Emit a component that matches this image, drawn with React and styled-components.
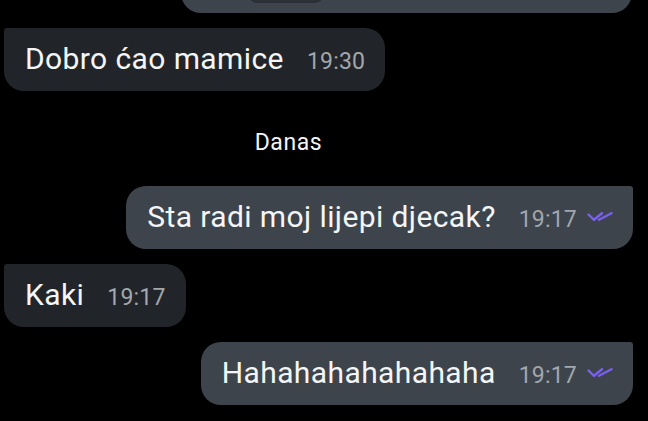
import React from 'react';
import styled, { createGlobalStyle } from 'styled-components';

const GlobalStyle = createGlobalStyle`
  html, body {
    margin: 0;
    padding: 0;
    background: #000;
    overflow: hidden;
  }
  body {
    font-family: Roboto, "Liberation Sans", sans-serif;
    -webkit-font-smoothing: antialiased;
  }
`;

const Chat = styled.div`
  display: flex;
  flex-direction: column;
  align-items: flex-start;
  gap: 15px;
  padding: 0 15px 0 4px;
  height: 421px;
  box-sizing: border-box;
`;

const Bubble = styled.div`
  align-self: ${p => (p.$out ? 'flex-end' : 'flex-start')};
  display: flex;
  align-items: baseline;
  box-sizing: border-box;
  height: 63px;
  padding: 12px 20px 0 21px;
  background: ${p => (p.$out ? '#3d444c' : '#212529')};
  border-radius: ${p => (p.$out ? '20px 3px 20px 20px' : '3px 20px 20px 20px')};
`;

const TopBubble = styled.div`
  align-self: flex-end;
  width: 451px;
  height: 60px;
  margin-top: -47px;
  margin-right: 1px;
  box-sizing: border-box;
  padding-left: 68px;
  background: #3d444c;
  border-radius: 20px 3px 20px 20px;
`;

const Preview = styled.div`
  width: 74px;
  height: 50px;
  background: #2b3037;
  border-radius: 0 0 8px 8px;
`;

const Text = styled.span`
  color: #f4f5f6;
  font-size: 30px;
  letter-spacing: 0.4px;
  line-height: 38px;
  white-space: nowrap;
`;

const Meta = styled.span`
  display: inline-flex;
  align-items: center;
  gap: 10px;
  margin-left: 23px;
  color: #a3a7ab;
  font-size: 23px;
  letter-spacing: 0.2px;
  line-height: 27px;
`;

const CheckIcon = styled.svg`
  margin-bottom: 7px;
`;

const DayLabel = styled.div`
  align-self: stretch;
  margin: 25px 60px 16px 0;
  text-align: center;
  color: #f4f4f4;
  font-size: 23px;
  letter-spacing: 0.6px;
  line-height: 24px;
`;

const Checks = () => (
  <CheckIcon width="26" height="9" viewBox="0 0 26 9" fill="none" stroke="#7a5ff2" strokeWidth="2.4" strokeLinecap="round" strokeLinejoin="round">
    <path d="M1.5 2.5 L7 7.8 L15 1.2" />
    <path d="M12 7.8 L24.5 1.2" />
  </CheckIcon>
);

const Message = ({ out, text, time }) => (
  <Bubble $out={out}>
    <Text>{text}</Text>
    <Meta>
      {time}
      {out && <Checks />}
    </Meta>
  </Bubble>
);

export default function App() {
  return (
    <>
      <GlobalStyle />
      <Chat>
        <TopBubble>
          <Preview />
        </TopBubble>
        <Message text="Dobro ćao mamice" time="19:30" />
        <DayLabel>Danas</DayLabel>
        <Message out text="Sta radi moj lijepi djecak?" time="19:17" />
        <Message text="Kaki" time="19:17" />
        <Message out text="Hahahahahahahaha" time="19:17" />
      </Chat>
    </>
  );
}
